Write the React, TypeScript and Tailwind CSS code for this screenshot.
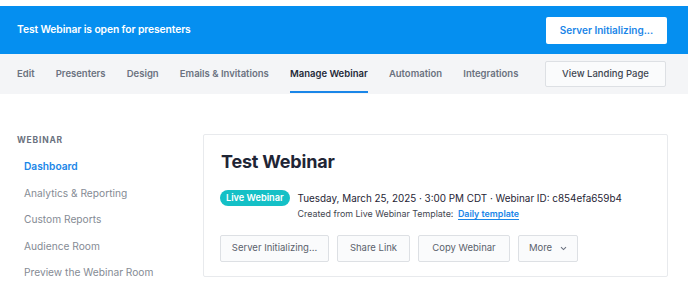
import React from "react";

const font = { fontFamily: "Inter, 'Noto Sans', sans-serif" };

export default function App() {
  const tabs = ["Edit", "Presenters", "Design", "Emails & Invitations", "Manage Webinar", "Automation", "Integrations"];
  const side = ["Analytics & Reporting", "Custom Reports", "Audience Room", "Preview the Webinar Room"];
  return (
    <div className="w-[688px] h-[289px] bg-white overflow-hidden whitespace-nowrap" style={font}>
      <div className="h-[6px] bg-white" />
      <div className="h-[48px] bg-[#058ff0] flex items-center justify-between pl-[17px] pr-[21px]">
        <span className="text-white text-[10.3px] font-semibold tracking-[-0.1px]">Test Webinar is open for presenters</span>
        <button className="w-[121px] h-[27px] bg-white rounded-[2px] text-[#1a86e8] text-[10px] font-semibold">Server Initializing...</button>
      </div>
      <div className="h-[40px] bg-[#f4f5f7] flex items-stretch justify-between pl-[17px] pr-[22px]">
        <div className="flex items-stretch gap-[21.2px]">
          {tabs.map((t) => (
            <div key={t} className={"relative flex items-center text-[9.5px] font-semibold " + (t === "Manage Webinar" ? "text-[#1f2937]" : "text-[#6b7280]")}>
              {t}
              {t === "Manage Webinar" && <div className="absolute left-0 right-0 bottom-[1px] h-[2px] bg-[#1a86e8]" />}
            </div>
          ))}
        </div>
        <div className="flex items-center">
          <button className="w-[121px] h-[26px] bg-[#fafbfc] border border-[#dde0e4] rounded-[2px] text-[#3f4650] text-[9.5px] font-medium">View Landing Page</button>
        </div>
      </div>
      <div className="flex pt-[40px]">
        <div className="w-[203px] pl-[17px]">
          <div className="text-[8.5px] font-bold tracking-[0.8px] text-[#6b7280] leading-[12px]">WEBINAR</div>
          <div className="flex flex-col pl-[7px] pt-[12px] gap-[10.5px]">
            <div className="text-[10.2px] leading-[16px] font-semibold text-[#1a86e8]">Dashboard</div>
            {side.map((s) => (
              <div key={s} className="text-[10.2px] leading-[16px] text-[#858b94]">{s}</div>
            ))}
          </div>
        </div>
        <div className="w-[465px] h-[143px] border border-[#e8eaed] rounded-[2px] pl-[16px] pt-[15px]">
          <div className="pl-[1px] text-[18px] leading-[24px] font-bold text-[#1f2535] tracking-[-0.2px]">Test Webinar</div>
          <div className="flex mt-[16px] gap-[8px]">
            <div className="h-[16px] px-[6px] rounded-full bg-[#14c0c6] text-white text-[9.2px] font-semibold leading-[16px]">Live Webinar</div>
            <div className="flex flex-col">
              <div className="text-[9.9px] leading-[16px] text-[#1f2535]">Tuesday, March 25, 2025 · 3:00 PM CDT · Webinar ID: c854efa659b4</div>
              <div className="text-[8.9px] leading-[16px] text-[#3f4650]">
                Created from Live Webinar Template: <span className="ml-[2px] text-[#1a86e8] font-semibold border-b border-[#1a86e8]">Daily template</span>
              </div>
            </div>
          </div>
          <div className="flex gap-[8px] mt-[13px]">
            {[
              ["Server Initializing...", 109],
              ["Share Link", 73],
              ["Copy Webinar", 92],
            ].map(([l, w]) => (
              <button key={l as string} style={{ width: w as number }} className="h-[27px] bg-[#fafbfc] border border-[#dde0e4] rounded-[2px] text-[#5b626c] text-[9.5px]">{l}</button>
            ))}
            <button className="w-[60px] h-[27px] bg-[#fafbfc] border border-[#dde0e4] rounded-[2px] text-[#5b626c] text-[9.5px] flex items-center justify-center gap-[8px]">
              More
              <svg width="7" height="5" viewBox="0 0 7 5"><path d="M1 1.2 L3.5 3.6 L6 1.2" fill="none" stroke="#6b7280" strokeWidth="1.1" /></svg>
            </button>
          </div>
        </div>
      </div>
    </div>
  );
}
